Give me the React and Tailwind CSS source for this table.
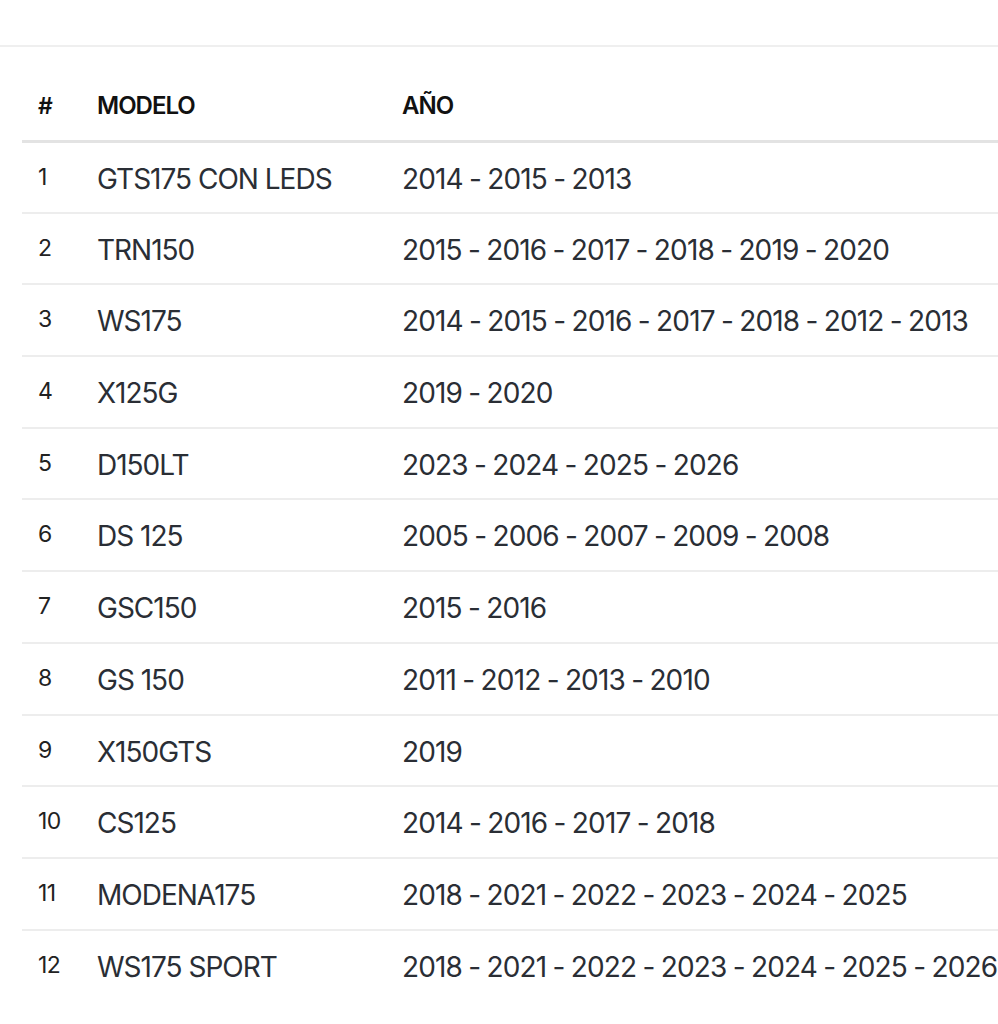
import React from "react";

const rows = [
  ["GTS175 CON LEDS", "2014 - 2015 - 2013"],
  ["TRN150", "2015 - 2016 - 2017 - 2018 - 2019 - 2020"],
  ["WS175", "2014 - 2015 - 2016 - 2017 - 2018 - 2012 - 2013"],
  ["X125G", "2019 - 2020"],
  ["D150LT", "2023 - 2024 - 2025 - 2026"],
  ["DS 125", "2005 - 2006 - 2007 - 2009 - 2008"],
  ["GSC150", "2015 - 2016"],
  ["GS 150", "2011 - 2012 - 2013 - 2010"],
  ["X150GTS", "2019"],
  ["CS125", "2014 - 2016 - 2017 - 2018"],
  ["MODENA175", "2018 - 2021 - 2022 - 2023 - 2024 - 2025"],
  ["WS175 SPORT", "2018 - 2021 - 2022 - 2023 - 2024 - 2025 - 2026"],
];

export default function App() {
  return (
    <div className="w-full min-h-[1024px] bg-white font-['Inter',sans-serif] overflow-hidden">
      <div className="h-[47px] border-b-2 border-[#efefef]" />
      <div className="pl-[22px] pt-[25px]">
        <table className="w-[976px] table-fixed border-collapse text-left">
          <colgroup>
            <col className="w-[59px]" />
            <col className="w-[305px]" />
            <col />
          </colgroup>
          <thead>
            <tr className="border-b-[3px] border-[#e3e3e3]">
              <th className="h-[69px] pl-[16px] text-[23px] font-semibold text-[#111] tracking-[-0.5px]">#</th>
              <th className="pl-[16px] text-[24px] font-semibold text-[#111] tracking-[-1px]">MODELO</th>
              <th className="pl-[16px] text-[24px] font-semibold text-[#111] tracking-[-1px]">AÑO</th>
            </tr>
          </thead>
          <tbody>
            {rows.map(([modelo, anio], i) => (
              <tr key={i} className="border-b-2 border-[#ededed] last:border-b-0">
                <td className="h-[71.7px] pl-[16px] align-top pt-[17px] text-[23px] text-[#222] tracking-[-0.5px]">{i + 1}</td>
                <td className="pl-[16px] align-top pt-[15px] text-[28px] text-[#2a2e35] tracking-[-1px] whitespace-nowrap">{modelo}</td>
                <td className="pl-[16px] align-top pt-[15px] text-[28px] text-[#2a2e35] tracking-[-0.85px] [word-spacing:-0.8px] whitespace-nowrap">{anio}</td>
              </tr>
            ))}
          </tbody>
        </table>
      </div>
    </div>
  );
}
